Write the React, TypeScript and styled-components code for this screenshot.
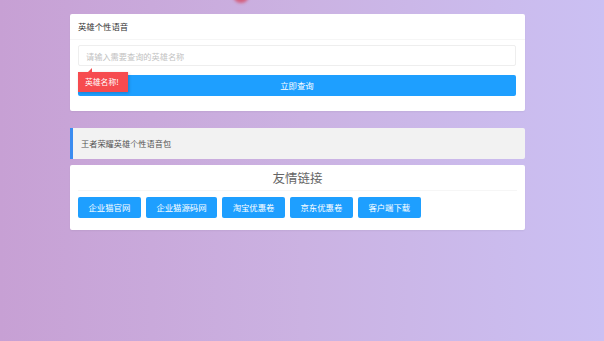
import styled, { createGlobalStyle } from "styled-components";

const GlobalStyle = createGlobalStyle`
  html, body {
    margin: 0;
    padding: 0;
  }
  body {
    font-family: "Noto Sans CJK SC", "Noto Sans", sans-serif;
    background: linear-gradient(90deg, #c7a0d4 0%, #cbb2e2 50%, #cbc0f3 100%);
    min-height: 341px;
    overflow: hidden;
  }
`;

const links = ["企业猫官网", "企业猫源码网", "淘宝优惠卷", "京东优惠卷", "客户端下载"];

const App = () => {
  return (
    <>
      <GlobalStyle />
      <Page>
        <Blob />
        <Card>
          <CardHeader>英雄个性语音</CardHeader>
          <SearchBody>
            <Input placeholder="请输入需要查询的英雄名称" />
            <SubmitRow>
              <Button type="button">立即查询</Button>
              <Tip>英雄名称!</Tip>
            </SubmitRow>
          </SearchBody>
        </Card>
        <Quote>王者荣耀英雄个性语音包</Quote>
        <Card>
          <LinkTitle>友情链接</LinkTitle>
          <LinkList>
            {links.map(l => (
              <LinkButton key={l}>{l}</LinkButton>
            ))}
          </LinkList>
        </Card>
      </Page>
    </>
  );
};

const Page = styled.div`
  position: relative;
  width: 455px;
  margin-left: 70px;
  padding-top: 14px;
  display: flex;
  flex-direction: column;
`;

// 顶部被裁掉的红色装饰
const Blob = styled.div`
  position: absolute;
  left: 163px;
  top: -12px;
  width: 16px;
  height: 15px;
  border-radius: 50%;
  background: #d4607e;
  filter: blur(1.5px);
`;

const Card = styled.div`
  background: #fff;
  border-radius: 2px;
  box-shadow: 0 1px 2px rgba(0, 0, 0, 0.05);
`;

const CardHeader = styled.div`
  height: 25px;
  line-height: 25px;
  padding: 0 8px;
  font-size: 8.4px;
  color: #333;
  border-bottom: 1px solid #f6f6f6;
`;

const SearchBody = styled.div`
  padding: 5px 9px 15px 8px;
  display: flex;
  flex-direction: column;
  gap: 9px;
`;

const Input = styled.input`
  box-sizing: border-box;
  height: 21px;
  width: 100%;
  padding: 0 7px;
  border: 1px solid #eee;
  border-radius: 2px;
  font-family: inherit;
  font-size: 8.2px;
  color: #333;
  outline: none;
  &::placeholder {
    color: #c2c2c2;
  }
`;

const SubmitRow = styled.div`
  position: relative;
`;

const Button = styled.button`
  display: block;
  width: 100%;
  height: 21px;
  border: none;
  border-radius: 2px;
  background: #1e9fff;
  color: #fff;
  font-family: inherit;
  font-size: 8.4px;
  padding: 0 0 2px;
`;

const Tip = styled.div`
  position: absolute;
  left: 0;
  top: -3px;
  width: 50px;
  height: 20px;
  line-height: 19px;
  box-sizing: border-box;
  padding-left: 7px;
  background: #f64b4f;
  color: #fff;
  font-size: 7.8px;
  box-shadow: 1px 1px 3px rgba(0, 0, 0, 0.2);
  &::before {
    content: "";
    position: absolute;
    left: 10px;
    top: -4px;
    border-left: 4px solid transparent;
    border-bottom: 4px solid #f64b4f;
  }
`;

const Quote = styled.div`
  margin: 17px 0 6px;
  height: 31px;
  line-height: 31px;
  padding-left: 8px;
  border-left: 3px solid #3b8cf0;
  border-radius: 0 2px 2px 0;
  background: #f2f2f2;
  font-size: 8.2px;
  color: #555;
`;

const LinkTitle = styled.div`
  height: 25px;
  line-height: 25px;
  margin: 0 8px;
  text-align: center;
  font-size: 12.5px;
  color: #666;
  border-bottom: 1px solid #f6f6f6;
`;

const LinkList = styled.div`
  display: flex;
  gap: 5px;
  padding: 6px 8px 12px;
`;

const LinkButton = styled.a`
  height: 21px;
  line-height: 21px;
  padding: 0 10.5px;
  border-radius: 2px;
  background: #1e9fff;
  color: #fff;
  font-size: 8.4px;
  white-space: nowrap;
  cursor: pointer;
`;

export default App;
